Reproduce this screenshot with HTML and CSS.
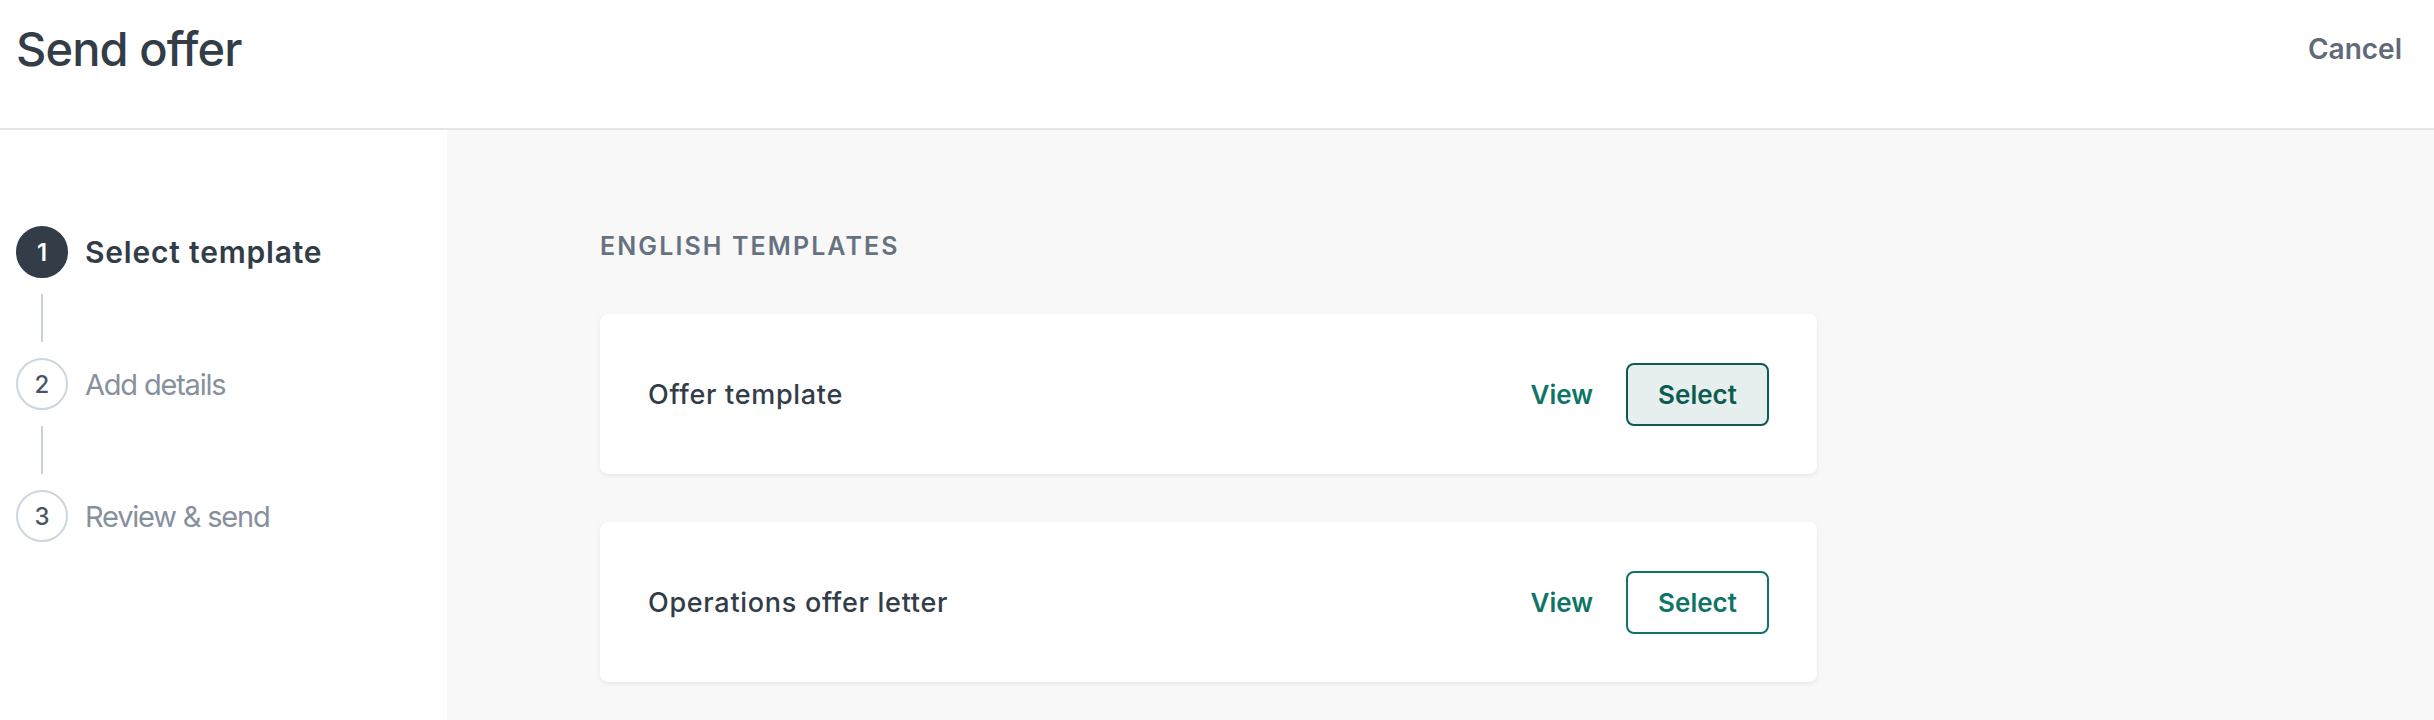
FILE: index.html
```html
<!DOCTYPE html>
<html lang="en">
<head>
<meta charset="utf-8">
<title>Send offer</title>
<link rel="stylesheet" href="styles.css">
</head>
<body>
<header class="topbar">
  <h1 class="title">Send offer</h1>
  <a class="cancel" href="#">Cancel</a>
</header>
<div class="layout">
  <aside class="sidebar">
    <ol class="steps">
      <li class="step step-active">
        <span class="step-num">1</span>
        <span class="step-label">Select template</span>
      </li>
      <li class="connector" aria-hidden="true"></li>
      <li class="step">
        <span class="step-num">2</span>
        <span class="step-label">Add details</span>
      </li>
      <li class="connector" aria-hidden="true"></li>
      <li class="step">
        <span class="step-num">3</span>
        <span class="step-label">Review &amp; send</span>
      </li>
    </ol>
  </aside>
  <main class="content">
    <h2 class="section-title">ENGLISH TEMPLATES</h2>
    <div class="card-list">
      <div class="card">
        <span class="card-name">Offer template</span>
        <div class="card-actions">
          <a class="link-btn" href="#">View</a>
          <button class="select-btn select-btn-focus">Select</button>
        </div>
      </div>
      <div class="card">
        <span class="card-name">Operations offer letter</span>
        <div class="card-actions">
          <a class="link-btn" href="#">View</a>
          <button class="select-btn">Select</button>
        </div>
      </div>
    </div>
  </main>
</div>
</body>
</html>
```

FILE: styles.css
```css
* { box-sizing: border-box; }

html, body {
  margin: 0;
  padding: 0;
  height: 100%;
}

body {
  font-family: Inter, "Noto Sans", "Liberation Sans", sans-serif;
  color: #323d48;
  background: #ffffff;
  display: flex;
  flex-direction: column;
}

.topbar {
  height: 130px;
  flex: none;
  display: flex;
  justify-content: space-between;
  align-items: flex-start;
  padding: 20px 32px 0 16px;
  border-bottom: 2px solid #e2e6ea;
  background: #ffffff;
}

.title {
  margin: 0;
  font-size: 47px;
  line-height: 58px;
  font-weight: 500;
  letter-spacing: -0.9px;
  color: #323d48;
}

.cancel {
  font-size: 28px;
  line-height: 58px;
  font-weight: 600;
  color: #5f6b78;
  text-decoration: none;
}

.layout {
  flex: 1;
  display: flex;
}

.sidebar {
  width: 447px;
  flex: none;
  background: #ffffff;
  padding: 96px 0 0 16px;
}

.steps {
  list-style: none;
  margin: 0;
  padding: 0;
}

.step {
  display: flex;
  align-items: center;
  gap: 17px;
  height: 52px;
}

.step-num {
  width: 52px;
  height: 52px;
  flex: none;
  border-radius: 50%;
  border: 2px solid #cdd5df;
  display: flex;
  align-items: center;
  justify-content: center;
  font-size: 24px;
  font-weight: 500;
  color: #4b5664;
  background: #ffffff;
}

.step-label {
  font-size: 29px;
  font-weight: 400;
  color: #87919e;
  letter-spacing: -1.2px;
}

.step-active .step-num {
  background: #323d48;
  border-color: #323d48;
  color: #ffffff;
  font-weight: 600;
}

.step-active .step-label {
  font-size: 30px;
  font-weight: 600;
  color: #323d48;
  letter-spacing: 0.8px;
}

.connector {
  width: 2px;
  height: 48px;
  margin: 16px 0 16px 25px;
  background: #c9d1dc;
}

.content {
  flex: 1;
  background: #f8f8f8;
  padding: 100px 0 0 153px;
}

.section-title {
  margin: 0 0 52px;
  font-size: 25px;
  line-height: 32px;
  font-weight: 600;
  color: #667280;
  letter-spacing: 2.1px;
}

.card-list {
  display: flex;
  flex-direction: column;
  gap: 48px;
  width: 1217px;
}

.card {
  height: 160px;
  background: #ffffff;
  border-radius: 8px;
  box-shadow: 0 2px 5px rgba(0, 0, 0, 0.07);
  display: flex;
  align-items: center;
  justify-content: space-between;
  padding: 0 48px;
}

.card-name {
  font-size: 27px;
  font-weight: 500;
  letter-spacing: 0.7px;
  color: #323d48;
}

.card-actions {
  display: flex;
  align-items: center;
  gap: 33px;
}

.link-btn {
  font-size: 26px;
  font-weight: 600;
  color: #0e7466;
  text-decoration: none;
}

.select-btn {
  width: 143px;
  height: 63px;
  border: 2px solid #0e7466;
  border-radius: 8px;
  background: #ffffff;
  color: #0e7466;
  font-family: inherit;
  font-size: 26px;
  font-weight: 600;
  padding: 0;
  cursor: pointer;
}

.select-btn-focus {
  background: #e6efee;
  border-color: #0b5b51;
  color: #0b5b51;
}
```
